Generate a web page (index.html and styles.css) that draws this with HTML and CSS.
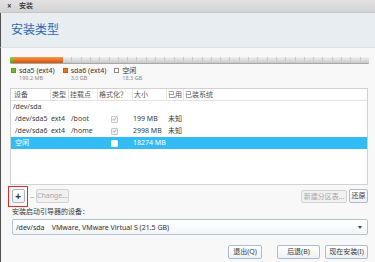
FILE: index.html
```html
<!DOCTYPE html>
<html>
<head>
<meta charset="utf-8">
<link rel="stylesheet" href="styles.css">
</head>
<body>
<div class="win">
  <div class="titlebar"><span class="close">×</span><span class="wtitle">安装</span></div>
  <div class="header"><h1 class="htitle">安装类型</h1></div>
  <div class="main">
    <div class="bar">
      <div class="seg seg-green"></div>
      <div class="seg seg-orange"></div>
      <div class="seg seg-free"></div>
    </div>
    <div class="legend">
      <div class="lg"><span class="sw sw-green"></span><div><div class="ln">sda5 (ext4)</div><div class="sz">199.2 MB</div></div></div>
      <div class="lg"><span class="sw sw-orange"></span><div><div class="ln">sda6 (ext4)</div><div class="sz">3.0 GB</div></div></div>
      <div class="lg"><span class="sw sw-free"></span><div><div class="ln">空闲</div><div class="sz">18.3 GB</div></div></div>
    </div>
    <div class="table">
      <div class="row head">
        <div class="hc hc-first">设备</div>
        <div class="hc">类型</div>
        <div class="hc">挂载点</div>
        <div class="hc">格式化？</div>
        <div class="hc">大小</div>
        <div class="hc">已用</div>
        <div class="hc">已装系统</div>
      </div>
      <div class="row">
        <div class="c c-disk">/dev/sda</div>
      </div>
      <div class="row">
        <div class="c c-dev">/dev/sda5</div>
        <div class="c c-type">ext4</div>
        <div class="c c-mnt">/boot</div>
        <div class="c c-fmt"><span class="cb"><svg viewBox="0 0 6 6" width="6" height="6"><path d="M1 3.2 L2.4 4.6 L5 1.4" fill="none" stroke="#9a9a9a" stroke-width="0.9"/></svg></span></div>
        <div class="c c-size">199 MB</div>
        <div class="c c-used">未知</div>
        <div class="c"></div>
      </div>
      <div class="row">
        <div class="c c-dev">/dev/sda6</div>
        <div class="c c-type">ext4</div>
        <div class="c c-mnt">/home</div>
        <div class="c c-fmt"><span class="cb"><svg viewBox="0 0 6 6" width="6" height="6"><path d="M1 3.2 L2.4 4.6 L5 1.4" fill="none" stroke="#9a9a9a" stroke-width="0.9"/></svg></span></div>
        <div class="c c-size">2998 MB</div>
        <div class="c c-used">未知</div>
        <div class="c"></div>
      </div>
      <div class="row sel">
        <div class="c c-dev">空闲</div>
        <div class="c c-type"></div>
        <div class="c c-mnt"></div>
        <div class="c c-fmt"><span class="cb cb-white"></span></div>
        <div class="c c-size">18274 MB</div>
        <div class="c c-used"></div>
        <div class="c"></div>
      </div>
    </div>
    <div class="tools">
      <div class="tools-left">
        <span class="hl"><button class="btn btn-add">+</button></span>
        <span class="minus">−</span>
        <button class="btn btn-dis btn-change">Change...</button>
      </div>
      <div class="tools-right">
        <button class="btn btn-dis btn-newtable">新建分区表...</button>
        <button class="btn btn-revert">还原</button>
      </div>
    </div>
    <div class="lbl">安装启动引导器的设备：</div>
    <div class="combo">
      <span class="combo-text">/dev/sda&nbsp;&nbsp;&nbsp;&nbsp;VMware, VMware Virtual S (21.5 GB)</span>
      <span class="arrow"></span>
    </div>
    <div class="actions">
      <button class="btn btn-quit">退出(Q)</button>
      <button class="btn btn-back">后退(B)</button>
      <button class="btn btn-install">现在安装(I)</button>
    </div>
  </div>
</div>
</body>
</html>
```

FILE: styles.css
```css
* { box-sizing: border-box; }
html, body {
  margin: 0;
  padding: 0;
  width: 375px;
  height: 262px;
  overflow: hidden;
  background: #f8f8f8;
  font-family: "Noto Sans", "Noto Sans CJK SC", sans-serif;
  color: #3a3a3a;
}
.win { width: 375px; height: 262px; display: flex; flex-direction: column; }

.titlebar {
  height: 13px;
  display: flex;
  align-items: center;
  padding-left: 7px;
  background: linear-gradient(#e2e2e2, #d3d3d3);
  border-bottom: 1px solid #c6c6c6;
  font-size: 7px;
  line-height: 12px;
  color: #333;
}
.close { font-size: 8px; font-weight: bold; width: 12px; color: #3c3c3c; }
.wtitle { font-weight: 500; }

.header {
  height: 35px;
  background: #e7edf1;
  border-left: 1px solid #505050;
  border-bottom: 1px solid #dde3e7;
  display: flex;
  align-items: center;
  padding-left: 10px;
}
.htitle {
  margin: 0;
  font-size: 12px;
  font-weight: normal;
  color: #2c69b0;
  line-height: 14px;
}

.main {
  flex: 1;
  border-left: 1px solid #505050;
  padding: 0 7px 0 9px;
  display: flex;
  flex-direction: column;
}

.bar {
  margin-top: 9px;
  height: 7px;
  display: flex;
  border-radius: 1px;
  overflow: hidden;
  border-bottom: 1px solid #a8a8a8;
  margin-right: -1px;
}
.seg { height: 100%; }
.seg-green { width: 3px; background: linear-gradient(#8fd03a, #5aa51a); }
.seg-orange { width: 50px; background: linear-gradient(#f59a55, #e56c1c 60%, #c9580f); }
.seg-free {
  flex: 1;
  background:
    repeating-linear-gradient(90deg, transparent 0 8.3px, #c8c8c8 8.3px 9.3px),
    linear-gradient(#f0f0f0, #dedede 50%, #c9c9c9);
}

.legend {
  margin-top: 3px;
  display: flex;
  gap: 8px;
  padding-left: 1px;
  height: 15px;
}
.lg { display: flex; align-items: flex-start; }
.sw { width: 5px; height: 5px; margin-top: 1px; margin-right: 3px; flex: none; }
.sw-green { background: #6dbb26; border: 1px solid #5c9f1e; }
.sw-orange { background: #e8701f; border: 1px solid #c85c12; }
.sw-free { background: #fff; border: 1px solid #8a8a8a; }
.ln { font-size: 7px; line-height: 8px; color: #333; }
.sz { font-size: 5.5px; line-height: 7px; color: #8a8a8a; }

.table {
  margin-top: 6px;
  height: 97px;
  background: #fff;
  border: 1px solid #d2d2d2;
  font-size: 7px;
}
.row {
  display: grid;
  grid-template-columns: 39px 18px 29px 35px 34px 17px 1fr;
  height: 12px;
  align-items: center;
  line-height: 12px;
  white-space: nowrap;
}
.row.head {
  height: 12px;
  border-bottom: 1px solid #e2e2e2;
  color: #555;
  align-items: stretch;
  line-height: 11px;
}
.hc { border-left: 1px solid #e6e6e6; padding-left: 1px; }
.hc-first { border-left: none; padding-left: 3px; }
.c { overflow: visible; }
.c-disk { grid-column: 1 / -1; padding-left: 2px; }
.c-dev { padding-left: 4px; }
.c-type { padding-left: 1px; }
.c-mnt { padding-left: 3px; }
.c-fmt { display: flex; justify-content: center; align-items: center; }
.c-size { padding-left: 1px; }
.c-used { padding-left: 2px; }
.cb {
  width: 7px;
  height: 7px;
  border: 1px solid #c8c8c8;
  border-radius: 1px;
  background: #f3f3f3;
  display: flex;
  align-items: center;
  justify-content: center;
}
.cb svg { display: block; }
.cb-white { background: #fff; border-color: #e8f6fd; }
.row.sel { background: #33bcf4; color: #fff; }

.btn {
  font-family: "Noto Sans", "Noto Sans CJK SC", sans-serif;
  font-size: 7px;
  line-height: 12px;
  padding: 0;
  margin: 0;
  border: 1px solid #a9bdd0;
  border-radius: 2px;
  background: linear-gradient(#ffffff, #eef1f4);
  color: #3a3a3a;
  height: 14px;
  text-align: center;
}
.btn-dis { border-color: #d3d3d3; background: #f1f1f1; color: #a8a8a8; }

.tools {
  margin-top: 4px;
  height: 14px;
  display: flex;
  justify-content: space-between;
  align-items: center;
}
.tools-left { display: flex; align-items: center; padding-left: 2px; }
.hl {
  display: flex;
  margin: -4px -2px -4px -4px;
  padding: 2.5px 2.5px 2.5px 2.5px;
  border: 1.5px solid #e02a2a;
}
.btn-add {
  width: 13px;
  height: 14px;
  font-size: 10px;
  font-weight: bold;
  line-height: 12px;
  color: #333;
  border-color: #b5b5b5;
}
.minus { font-size: 8px; color: #9a9a9a; margin-left: 4px; width: 6px; }
.btn-change { width: 33px; margin-left: 0px; }
.tools-right { display: flex; gap: 2px; align-items: center; }
.btn-newtable { width: 46px; height: 13px; }
.btn-revert { width: 19px; height: 14px; }

.lbl {
  margin-top: 3px;
  font-size: 7px;
  line-height: 12px;
  padding-left: 2px;
  color: #3a3a3a;
}
.combo {
  margin-top: 1px;
  margin-left: 2px;
  height: 16px;
  border: 1px solid #b3c3d2;
  border-radius: 2px;
  background: linear-gradient(#ffffff, #f3f5f7);
  display: flex;
  align-items: center;
  justify-content: space-between;
  padding: 0 5px 0 3px;
  font-size: 7px;
  color: #333;
}
.arrow {
  width: 0;
  height: 0;
  border-left: 2.5px solid transparent;
  border-right: 2.5px solid transparent;
  border-top: 3px solid #444;
}

.actions {
  margin-top: 10px;
  display: flex;
  justify-content: flex-end;
  gap: 5px;
}
.btn-quit { width: 34px; margin-right: 10px; }
.btn-back { width: 43px; }
.btn-install { width: 43px; }
```
